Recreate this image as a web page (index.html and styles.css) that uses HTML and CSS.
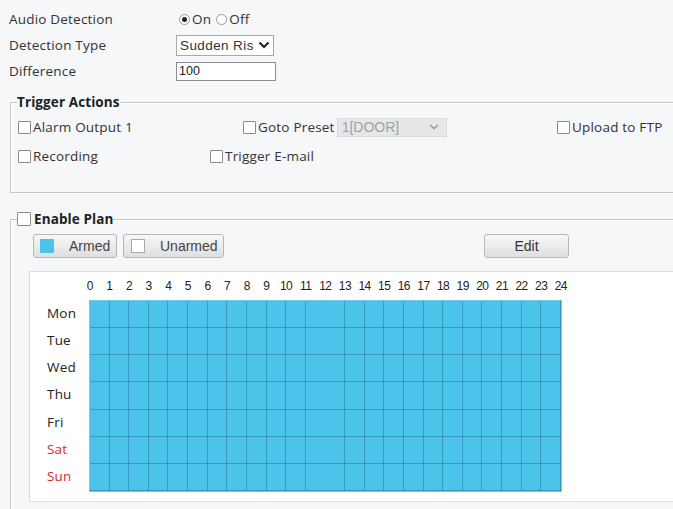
FILE: index.html
```html
<!DOCTYPE html>
<html lang="en">
<head>
<meta charset="utf-8">
<title>Audio Detection</title>
<link rel="stylesheet" href="styles.css">
</head>
<body>
<div class="page">
  <div class="row">
    <span class="label">Audio Detection</span>
    <span class="radio checked"></span><span class="opt">On</span>
    <span class="radio"></span><span class="opt">Off</span>
  </div>
  <div class="row">
    <span class="label">Detection Type</span>
    <div class="select type">
      <span class="value">Sudden Ris</span>
      <svg class="chev" width="12" height="8" viewBox="0 0 12 8"><path d="M1.5 1.5 L6 6 L10.5 1.5" fill="none" stroke="#222" stroke-width="2.2"/></svg>
    </div>
  </div>
  <div class="row">
    <span class="label">Difference</span>
    <div class="textbox">100</div>
  </div>

  <fieldset class="group trigger">
    <legend>Trigger Actions</legend>
    <div class="line">
      <label class="check c1"><span class="box"></span>Alarm Output 1</label>
      <label class="check c2"><span class="box"></span>Goto Preset
        <span class="select preset"><span class="value">1[DOOR]</span>
          <svg class="chev" width="12" height="8" viewBox="0 0 12 8"><path d="M2 2 L6 5.5 L10 2" fill="none" stroke="#8a9aa8" stroke-width="1.4"/></svg>
        </span>
      </label>
      <label class="check"><span class="box"></span>Upload to FTP</label>
    </div>
    <div class="line">
      <label class="check c3"><span class="box"></span>Recording</label>
      <label class="check"><span class="box"></span>Trigger E-mail</label>
    </div>
  </fieldset>

  <fieldset class="group plan">
    <legend><span class="box"></span>Enable Plan</legend>
    <div class="toolbar">
      <button class="btn state"><span class="swatch armed"></span>Armed</button>
      <button class="btn state wide"><span class="swatch"></span>Unarmed</button>
      <button class="btn edit">Edit</button>
    </div>
    <div class="schedule">
      <div class="hours">
        <span>0</span><span>1</span><span>2</span><span>3</span><span>4</span><span>5</span><span>6</span><span>7</span><span>8</span><span>9</span><span>10</span><span>11</span><span>12</span><span>13</span><span>14</span><span>15</span><span>16</span><span>17</span><span>18</span><span>19</span><span>20</span><span>21</span><span>22</span><span>23</span><span>24</span>
      </div>
      <div class="week">
        <div class="days">
          <span>Mon</span><span>Tue</span><span>Wed</span><span>Thu</span><span>Fri</span><span class="weekend">Sat</span><span class="weekend">Sun</span>
        </div>
        <div class="grid"></div>
      </div>
    </div>
  </fieldset>
</div>
</body>
</html>
```

FILE: styles.css
```css
html, body {
  margin: 0;
  padding: 0;
  background: #f5f7f9;
  overflow: hidden;
}

body {
  font-family: "Open Sans", "Noto Sans", sans-serif;
  font-size: 13.5px;
  letter-spacing: 0.2px;
  color: #333;
}

.page {
  width: 700px;
  padding-top: 6px;
}

/* top form rows */
.row {
  display: flex;
  align-items: center;
  height: 26px;
  padding-left: 9px;
}

.label {
  width: 167px;
  flex: none;
}

.radio {
  width: 9px;
  height: 9px;
  border: 1px solid #9a9a9a;
  border-radius: 50%;
  background: #fff;
  margin-left: 3px;
  margin-right: 2px;
  position: relative;
  flex: none;
}

.radio.checked::after {
  content: "";
  position: absolute;
  left: 2px;
  top: 2px;
  width: 5px;
  height: 5px;
  border-radius: 50%;
  background: #222;
}

.opt {
  margin-right: 2px;
}

.select {
  display: inline-flex;
  align-items: center;
  box-sizing: border-box;
  border: 1px solid #a9a9a9;
  background: #fff;
  font-family: "Liberation Sans", Arial, sans-serif;
  color: #333;
  letter-spacing: 0;
}

.select .value {
  flex: 1;
  white-space: nowrap;
}

.select.type {
  width: 98px;
  height: 21px;
  padding: 0 3px 0 3px;
  font-size: 13.5px;
}

.select.type .value {
  letter-spacing: 0.4px;
}

.textbox {
  box-sizing: border-box;
  width: 100px;
  height: 19px;
  border: 1px solid #8e8e8e;
  background: #fff;
  font-family: "Liberation Sans", Arial, sans-serif;
  font-size: 12.5px;
  letter-spacing: 0;
  line-height: 17px;
  padding-left: 2px;
  color: #222;
}

/* grouped sections */
.group {
  margin: 0 0 0 10px;
  padding: 0;
  border: 1px solid #c4c6c8;
  box-shadow: inset 1px 1px 0 #fff, 1px 1px 0 #fff;
  min-width: 0;
  width: 690px;
  box-sizing: border-box;
}

.group legend {
  font-weight: bold;
  font-size: 13.5px;
  letter-spacing: 0.1px;
  line-height: 16px;
  padding: 0;
  color: #222;
  display: flex;
  align-items: center;
}

.trigger {
  margin-top: 10px;
  padding: 5px 0 24px 7px;
}

.trigger legend {
  margin-left: -1px;
}

.line {
  display: flex;
  align-items: center;
  height: 24px;
}

.line + .line {
  margin-top: 5px;
}

.check {
  display: flex;
  align-items: center;
  white-space: nowrap;
  flex: none;
}

.check.c1 { width: 225px; }
.check.c2 { width: 314px; }
.check.c3 { width: 192px; }

.box {
  width: 11px;
  height: 11px;
  border: 1px solid #8a8a8a;
  background: #fff;
  border-radius: 1px;
  margin-right: 2px;
  flex: none;
}

.select.preset {
  width: 110px;
  height: 19px;
  margin-left: 2px;
  padding: 0 6px 0 4px;
  background: #e6e7e8;
  border-color: #dadbdc;
  color: #9aa3ab;
  font-size: 14px;
}

/* schedule section */
.plan {
  margin-top: 18px;
  padding: 7px 0 0 18px;
  height: 320px;
}

.plan legend {
  margin-left: -12px;
}

.plan legend .box {
  width: 12px;
  height: 12px;
  margin-right: 3px;
}

.toolbar {
  display: flex;
  align-items: center;
  padding-left: 4px;
  height: 24px;
}

.btn {
  box-sizing: border-box;
  height: 24px;
  border: 1px solid #b5b8bb;
  border-radius: 3px;
  background: linear-gradient(#f7f7f7, #dedfe0);
  font-family: "Liberation Sans", Arial, sans-serif;
  font-size: 14px;
  letter-spacing: 0;
  color: #444;
  display: flex;
  align-items: center;
  padding: 0;
}

.btn.state {
  width: 84px;
  padding-left: 6px;
  gap: 15px;
}

.btn.wide {
  width: 101px;
  margin-left: 6px;
  padding-left: 7px;
  gap: 15px;
}

.btn.edit {
  width: 85px;
  margin-left: 260px;
  justify-content: center;
  color: #333;
}

.swatch {
  width: 14px;
  height: 14px;
  box-sizing: border-box;
  border: 1px solid #aaa;
  background: #fff;
}

.swatch.armed {
  background: #4cc3ea;
  border-color: #4cc3ea;
}

.schedule {
  margin-top: 13px;
  background: #fff;
  border: 1px solid #dcdedf;
  border-right: none;
  height: 231px;
  box-sizing: border-box;
  padding: 7px 0 0 17px;
}

.hours {
  display: flex;
  height: 14px;
  margin-left: 33px;
  font-family: "Liberation Sans", Arial, sans-serif;
  font-size: 12px;
  line-height: 14px;
  color: #222;
  letter-spacing: -0.5px;
}

.hours span {
  width: 19.625px;
  text-align: center;
  flex: none;
}

.week {
  display: flex;
  margin-top: 8px;
}

.days {
  width: 43px;
  display: flex;
  flex-direction: column;
}

.days span {
  height: 27.14px;
  line-height: 25px;
  color: #222;
}

.days .weekend {
  color: #e0262b;
}

.grid {
  width: 471px;
  height: 190px;
  background-color: #4cc3ea;
  background-image:
    repeating-linear-gradient(to right, transparent 0, transparent 18.625px, rgba(38, 112, 150, 0.5) 18.625px, rgba(38, 112, 150, 0.5) 19.625px),
    repeating-linear-gradient(to bottom, transparent 0, transparent 26.14px, rgba(38, 112, 150, 0.5) 26.14px, rgba(38, 112, 150, 0.5) 27.14px);
  box-shadow: 0 0 0 1px #6cc9ea;
}
```
